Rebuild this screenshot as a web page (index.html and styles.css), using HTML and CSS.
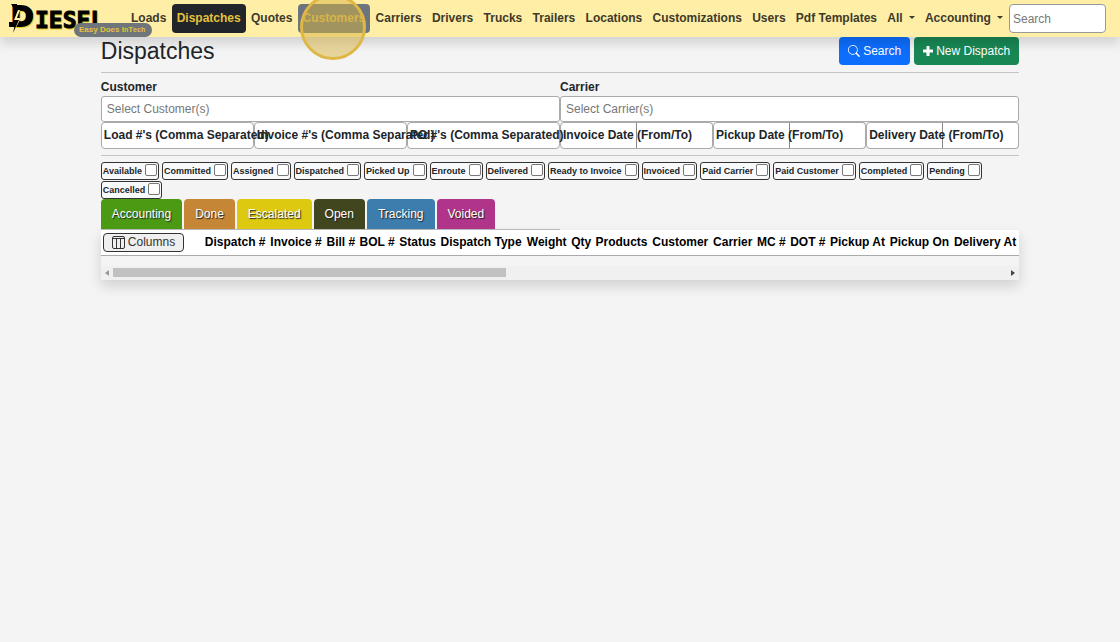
FILE: index.html
```html
<!DOCTYPE html>
<html lang="en">
<head>
<meta charset="utf-8">
<title>Dispatches</title>
<link rel="stylesheet" href="styles.css">
</head>
<body>
<header class="topbar">
  <a class="brand" href="#">
    <svg class="logo" width="100" height="34" viewBox="0 0 100 34" role="img" aria-label="Diesel">
      <g class="logo-glow">
        <text class="logo-initial" x="3" y="25">D</text>
        <text class="logo-rest" x="27" y="27">IESEL</text>
      </g>
      <text class="logo-initial" x="2" y="24">D</text>
      <text class="logo-rest" x="26" y="26">IESEL</text>
      <path d="M2 2h6v5H5zM0 20h4v5H0z"/>
      <path class="logo-bolt" d="M9 8L5 18h3L4 31l8-15H8l3-8z"/>
      <path d="M7 18h3L4 31z"/>
    </svg>
    <span class="tagline">Easy Does I<small>n</small>T<small>ech</small></span>
  </a>
  <nav class="nav">
    <a href="#">Loads</a>
    <a href="#" class="active">Dispatches</a>
    <a href="#">Quotes</a>
    <a href="#" class="hovered">Customers<span class="click-ring"></span></a>
    <a href="#">Carriers</a>
    <a href="#">Drivers</a>
    <a href="#">Trucks</a>
    <a href="#">Trailers</a>
    <a href="#">Locations</a>
    <a href="#">Customizations</a>
    <a href="#">Users</a>
    <a href="#">Pdf Templates</a>
    <a href="#" class="drop">All</a>
    <a href="#" class="drop">Accounting</a>
  </nav>
  <input class="nav-search" type="search" placeholder="Search" aria-label="Search">
</header>

<main class="page">
  <div class="title-row">
    <h1>Dispatches</h1>
    <div class="actions">
      <button class="btn btn-blue" type="button">
        <svg width="12" height="12" viewBox="0 0 16 16" fill="currentColor" aria-hidden="true"><path d="M11.742 10.344a6.500 6.500 0 1 0-1.397 1.398l3.850 3.850a1 1 0 0 0 1.415-1.414l-3.850-3.850zM12 6.500a5.500 5.500 0 1 1-11 0 5.500 5.500 0 0 1 11 0z"/></svg>
        Search
      </button>
      <button class="btn btn-green" type="button">
        <svg width="10" height="10" viewBox="0 0 10 10" fill="currentColor" aria-hidden="true"><path d="M3.500 0h3v3.500H10v3H6.500V10h-3V6.500H0v-3h3.500z"/></svg>
        New Dispatch
      </button>
    </div>
  </div>

  <form class="filters">
    <div class="pickers">
      <div class="picker"><label for="customer">Customer</label><input id="customer" type="text" placeholder="Select Customer(s)"></div>
      <div class="picker"><label for="carrier">Carrier</label><input id="carrier" type="text" placeholder="Select Carrier(s)"></div>
    </div>
    <div class="fields">
      <div class="field"><input id="loads" type="text"><label for="loads">Load #'s (Comma Separated)</label></div>
      <div class="field"><input id="invoices" type="text"><label for="invoices">Invoice #'s (Comma Separated)</label></div>
      <div class="field"><input id="pos" type="text"><label for="pos">PO #'s (Comma Separated)</label></div>
      <div class="field range"><input id="inv-date" type="text"><input type="text" aria-label="Invoice Date to"><label for="inv-date">Invoice Date (From/To)</label></div>
      <div class="field range"><input id="pick-date" type="text"><input type="text" aria-label="Pickup Date to"><label for="pick-date">Pickup Date (From/To)</label></div>
      <div class="field range"><input id="del-date" type="text"><input type="text" aria-label="Delivery Date to"><label for="del-date">Delivery Date (From/To)</label></div>
    </div>
    <div class="statuses">
      <label class="chip">Available<input type="checkbox"></label>
      <label class="chip">Committed<input type="checkbox"></label>
      <label class="chip">Assigned<input type="checkbox"></label>
      <label class="chip">Dispatched<input type="checkbox"></label>
      <label class="chip">Picked Up<input type="checkbox"></label>
      <label class="chip">Enroute<input type="checkbox"></label>
      <label class="chip">Delivered<input type="checkbox"></label>
      <label class="chip">Ready to Invoice<input type="checkbox"></label>
      <label class="chip">Invoiced<input type="checkbox"></label>
      <label class="chip">Paid Carrier<input type="checkbox"></label>
      <label class="chip">Paid Customer<input type="checkbox"></label>
      <label class="chip">Completed<input type="checkbox"></label>
      <label class="chip">Pending<input type="checkbox"></label>
      <label class="chip">Cancelled<input type="checkbox"></label>
    </div>
  </form>

  <section class="results">
    <div class="tabs">
      <button type="button" class="tab accounting">Accounting</button>
      <button type="button" class="tab done">Done</button>
      <button type="button" class="tab escalated">Escalated</button>
      <button type="button" class="tab open">Open</button>
      <button type="button" class="tab tracking">Tracking</button>
      <button type="button" class="tab voided">Voided</button>
    </div>
    <div class="sheet">
      <table>
        <thead>
          <tr>
            <th class="tools"><button type="button" class="columns">
              <svg width="13" height="13" viewBox="0 0 13 13" fill="none" stroke="currentColor" aria-hidden="true"><rect x="0.500" y="0.500" width="12" height="12" rx="1.500"/><path d="M0.500 2.500h12M4.500 2.500v10M8.500 2.500v10"/></svg>
              Columns</button></th>
            <th>Dispatch #</th><th>Invoice #</th><th>Bill #</th><th>BOL #</th><th>Status</th><th>Dispatch Type</th><th>Weight</th><th>Qty</th><th>Products</th><th>Customer</th><th>Carrier</th><th>MC #</th><th>DOT #</th><th>Pickup At</th><th>Pickup On</th><th>Delivery At</th>
          </tr>
        </thead>
      </table>
      <div class="scroller">
        <svg width="4" height="6" viewBox="0 0 4 6" fill="#999" aria-hidden="true"><path d="M4 0v6L0 3z"/></svg>
        <div class="track"><div class="thumb"></div></div>
        <svg width="4" height="6" viewBox="0 0 4 6" fill="#444" aria-hidden="true"><path d="M0 0v6l4-3z"/></svg>
      </div>
    </div>
  </section>
</main>
</body>
</html>
```
FILE: styles.css
```css
* { box-sizing: border-box; }

body {
  margin: 0;
  min-height: 100vh;
  background: #f4f4f4;
  color: #212529;
  font-family: "Liberation Sans", Arial, sans-serif;
  font-size: 12px;
  line-height: 16px;
}

input, button { font: inherit; color: inherit; margin: 0; }
input::placeholder { color: #777; opacity: 1; }

.topbar {
  position: relative;
  z-index: 1;
  display: flex;
  align-items: center;
  height: 37px;
  padding: 0 14px 0 9px;
  background: #ffeea6;
  box-shadow: 0 6px 12px rgba(0, 0, 0, 0.15);
}

.brand {
  position: relative;
  flex: none;
  width: 117px;
  height: 33px;
  color: #000;
  text-decoration: none;
}
.logo { display: block; overflow: visible; }
.logo text { font-weight: bold; stroke: currentColor; }
.logo-rest { font-family: "DejaVu Sans Mono", monospace; font-size: 23px; stroke-width: 1; }
.logo-initial { font-family: "DejaVu Sans", sans-serif; font-size: 27px; stroke-width: 2; }
.logo-glow { fill: #e8cf2e; color: #e8cf2e; }
.logo-bolt { fill: #ffeea6; }

.tagline {
  position: absolute;
  top: 21px;
  left: 65px;
  padding: 0 7px 0 5px;
  border-radius: 7px;
  background: #6f767b;
  color: #e5c13c;
  font-size: 8px;
  font-weight: bold;
  line-height: 14px;
  white-space: nowrap;
}
.tagline small { font-size: 7px; }

.nav { display: flex; flex: 1; justify-content: space-between; }
.nav a {
  position: relative;
  padding: 0 5px;
  border-radius: 4px;
  color: #3d3a2b;
  font-weight: bold;
  line-height: 29px;
  text-decoration: none;
  white-space: nowrap;
}
.nav .active { background: #212529; color: #e5c13c; }
.nav .hovered { background: #6c757d; color: #d5b64f; }
.nav .drop::after {
  content: "";
  display: inline-block;
  margin-left: 6px;
  vertical-align: 3px;
  border: 3px solid transparent;
  border-top-color: currentColor;
  border-bottom: 0;
}
.click-ring {
  position: absolute;
  top: -10px;
  left: 2px;
  width: 66px;
  height: 66px;
  border: 3px solid #dfb746;
  border-radius: 50%;
  background: rgba(215, 180, 65, 0.5);
}

.nav-search {
  flex: none;
  width: 97px;
  height: 29px;
  margin-left: 1px;
  padding: 0 3px;
  border: 1px solid #999;
  border-radius: 4px;
  background: #fff;
}

.page { padding: 0 9%; }

.title-row {
  display: flex;
  justify-content: space-between;
  align-items: center;
  height: 36px;
  padding-bottom: 7px;
  border-bottom: 1px solid #c4c4c4;
}
h1 { margin: 0; font-size: 23px; font-weight: normal; line-height: 28px; }
.actions { display: flex; gap: 4px; }
.btn {
  display: flex;
  align-items: center;
  gap: 3px;
  height: 28px;
  padding: 0 9px;
  border: 0;
  border-radius: 4px;
  color: #fff;
}
.btn-blue { background: #0d6efd; }
.btn-green { background: #198754; }

.pickers { display: grid; grid-template-columns: 1fr 1fr; padding-top: 6px; }
.picker { display: flex; flex-direction: column; }
.picker label { font-weight: bold; line-height: 17px; }
.picker input {
  width: 100%;
  height: 26px;
  padding: 0 5px;
  border: 1px solid #aaa;
  border-radius: 3px;
  background: #fff;
}

.fields {
  display: grid;
  grid-template-columns: repeat(6, minmax(0, 1fr));
  padding-bottom: 6px;
  border-bottom: 1px solid #c4c4c4;
}
.field { position: relative; display: flex; }
.field input {
  flex: 1;
  min-width: 0;
  height: 27px;
  border: 1px solid #aaa;
  border-radius: 4px;
  background: #fff;
}
.range input:first-child { border-radius: 4px 0 0 4px; }
.range input:nth-child(2) { border-radius: 0 4px 4px 0; border-left: 1px solid #888; margin-left: -1px; }
.field label {
  position: absolute;
  top: 5px;
  left: 3px;
  z-index: 1;
  font-weight: bold;
  white-space: nowrap;
}

.statuses { display: flex; flex-wrap: wrap; gap: 1px 3px; padding-top: 6px; }
.chip {
  display: flex;
  align-items: center;
  gap: 3px;
  height: 18px;
  padding: 0 1px;
  border: 1px solid #333;
  border-radius: 3px;
  background: #f8f9fa;
  font-size: 9px;
  font-weight: bold;
}
.chip input {
  appearance: none;
  width: 12px;
  height: 12px;
  margin-bottom: 3px;
  border: 1px solid #777;
  border-radius: 2px;
  background: #fff;
}

.tabs {
  display: flex;
  gap: 2px;
  width: 50%;
  height: 31px;
  border-bottom: 1px solid #bbb;
}
.tab {
  padding: 0 11px;
  border: 0;
  border-radius: 4px 4px 0 0;
  color: #fff;
  text-shadow: 1px 1px 1px #222;
}
.accounting { background: #4c9a14; }
.done { background: #c58735; }
.escalated { background: #dcc910; }
.open { background: #41461f; }
.tracking { background: #3d7dae; }
.voided { background: #b03489; }

.sheet { background: #f4f4f4; box-shadow: 0 6px 12px rgba(0, 0, 0, 0.15); }
table { width: 100%; border-collapse: collapse; background: #fff; color: #000; }
thead { border-bottom: 1px solid #aaa; }
th { height: 25px; padding: 0 2px; text-align: left; white-space: nowrap; }
.tools { width: 102px; font-weight: normal; }
.columns {
  display: flex;
  align-items: center;
  gap: 3px;
  height: 19px;
  padding: 0 8px;
  border: 1px solid #333;
  border-radius: 4px;
  background: #efefef;
  color: #333;
}

.scroller {
  display: flex;
  align-items: center;
  gap: 4px;
  margin-top: 10px;
  padding: 0 4px;
  height: 14px;
  background: #f0f0f0;
}
.track { flex: 1; }
.thumb { width: 44%; height: 9px; background: #c1c1c1; }
```
